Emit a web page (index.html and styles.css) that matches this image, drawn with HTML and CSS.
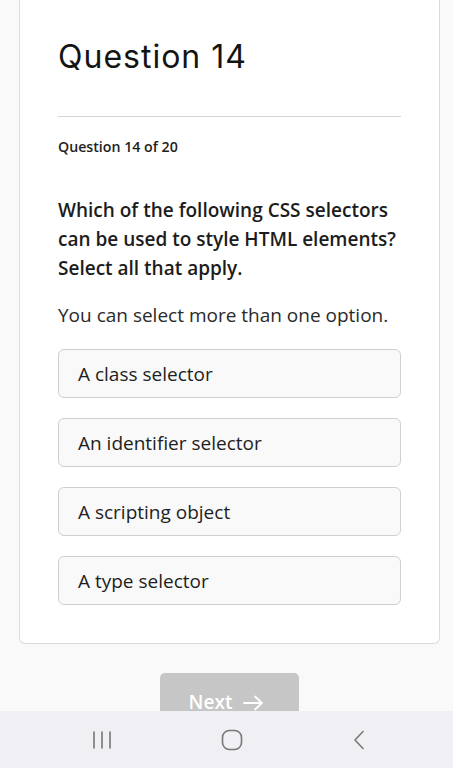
FILE: index.html
```html
<!DOCTYPE html>
<html lang="en">
<head>
<meta charset="utf-8">
<title>Question 14</title>
<link rel="stylesheet" href="styles.css">
</head>
<body>
<main class="page">
  <section class="card">
    <h1 class="title">Question 14</h1>
    <hr class="rule">
    <p class="counter">Question 14 of 20</p>
    <p class="prompt">Which of the following CSS selectors can be used to style HTML elements? Select all that apply.</p>
    <p class="hint">You can select more than one option.</p>
    <div class="options">
      <div class="option">A class selector</div>
      <div class="option">An identifier selector</div>
      <div class="option">A scripting object</div>
      <div class="option">A type selector</div>
    </div>
  </section>
  <div class="actions">
    <button class="next" type="button">Next <svg class="arrow" width="21" height="16" viewBox="0 0 21 16"><path d="M1 8h18M12 1.5L19 8l-7 6.5" stroke="#fff" stroke-width="1.8" fill="none" stroke-linecap="round" stroke-linejoin="round"/></svg></button>
  </div>
</main>
<nav class="navbar">
  <svg class="nav-icon" width="20" height="20" viewBox="0 0 20 20"><path d="M2 1.5v17M10 1.5v17M18 1.5v17" stroke="#777" stroke-width="1.6" fill="none"/></svg>
  <svg class="nav-icon" width="22" height="22" viewBox="0 0 22 22"><rect x="1.5" y="1.5" width="19" height="19" rx="7" stroke="#777" stroke-width="1.6" fill="none"/></svg>
  <svg class="nav-icon" width="14" height="20" viewBox="0 0 14 20"><path d="M11 1.5L3 10l8 8.5" stroke="#777" stroke-width="1.6" fill="none" stroke-linecap="round" stroke-linejoin="round"/></svg>
</nav>
</body>
</html>
```
FILE: styles.css
```css
html, body {
  margin: 0;
  padding: 0;
  background: #f9f9f9;
}
body {
  font-family: "Open Sans", "Liberation Sans", sans-serif;
  color: #1c1c1c;
}
.page {
  padding-bottom: 80px;
}
.card {
  margin: 0 13px 0 19px;
  background: #fff;
  border: 1px solid #dcdcdc;
  border-top: none;
  border-radius: 0 0 6px 6px;
  padding: 37px 38px 38px 38px;
}
.title {
  margin: 0;
  font-family: Inter, "Liberation Sans", sans-serif;
  font-weight: 400;
  font-size: 32px;
  line-height: 40px;
  letter-spacing: 1px;
  color: #141414;
}
.rule {
  margin: 39px 0 0 0;
  border: none;
  height: 1px;
  background: #d4d4d4;
}
.counter {
  margin: 20px 0 0 0;
  font-size: 14.2px;
  line-height: 20px;
  font-weight: 600;
  color: #222;
}
.prompt {
  margin: 39px 0 0 0;
  font-size: 19px;
  line-height: 29px;
  font-weight: 600;
}
.hint {
  margin: 18px 0 0 0;
  font-size: 19px;
  line-height: 29px;
  font-weight: 400;
  color: #2a2a2a;
}
.options {
  margin-top: 19px;
  display: flex;
  flex-direction: column;
  gap: 20px;
}
.option {
  height: 47px;
  display: flex;
  align-items: center;
  padding: 0 19px;
  border: 1px solid #cfcfcf;
  border-radius: 6px;
  background: #f9f9f9;
  font-size: 19px;
  color: #1e1e1e;
}
.actions {
  display: flex;
  justify-content: center;
  padding-top: 29px;
  padding-left: 6px;
}
.next {
  width: 139px;
  height: 50px;
  border: none;
  border-radius: 5px;
  background: #c6c6c6;
  color: #fff;
  font-family: "Open Sans", "Liberation Sans", sans-serif;
  font-weight: 600;
  font-size: 19px;
  padding: 8px 6px 0 0;
  display: flex;
  align-items: center;
  justify-content: center;
  gap: 11px;
}
.arrow {
  display: block;
  margin-top: 1px;
}
.navbar {
  position: fixed;
  left: 0;
  right: 0;
  bottom: 0;
  height: 57px;
  background: #f0eff3;
  display: flex;
  align-items: center;
  justify-content: space-between;
  padding: 0 87px 0 92px;
}
.nav-icon {
  display: block;
}
```
